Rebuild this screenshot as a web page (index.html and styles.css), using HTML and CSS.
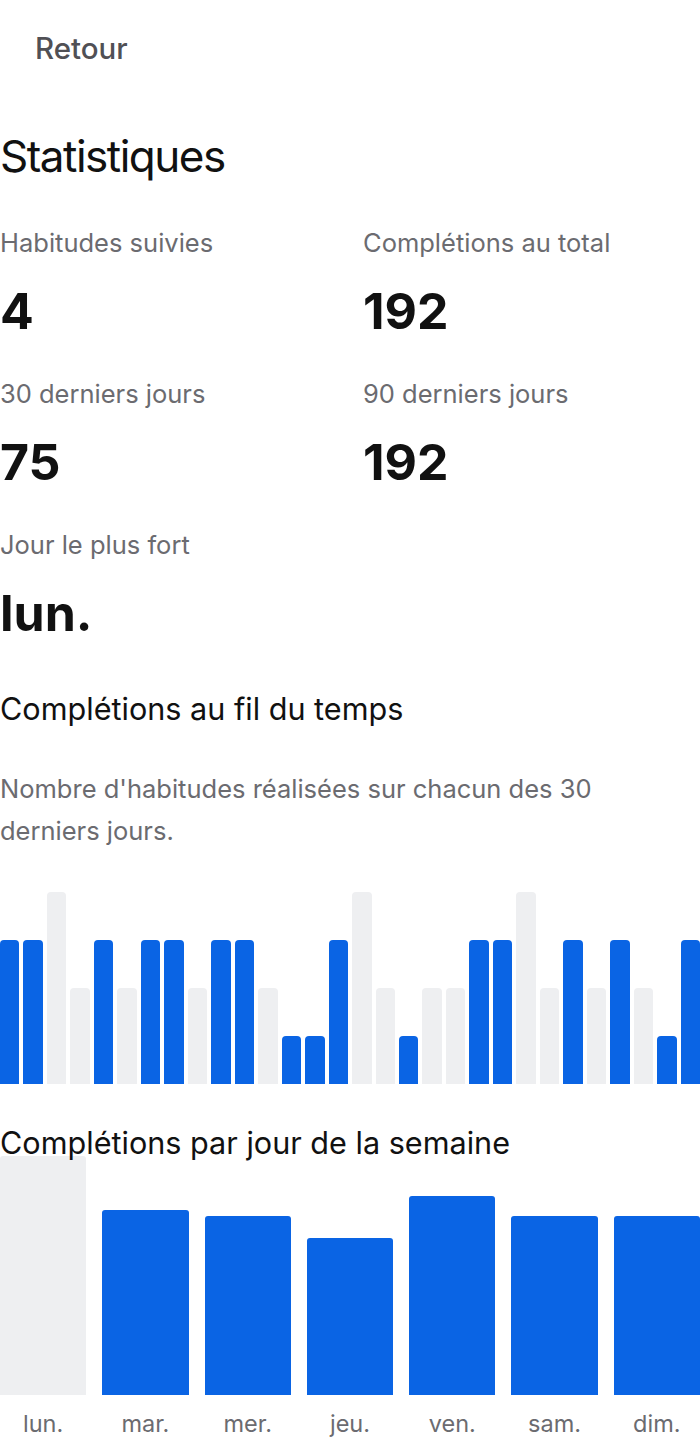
FILE: index.html
```html
<!DOCTYPE html>
<html lang="fr">
<head>
    <meta charset="UTF-8">
    <title>Statistiques</title>
    <link rel="stylesheet" href="styles.css">
</head>
<body>
<div class="page">
    <div class="top">
        <button class="back" type="button">Retour</button>
    </div>

    <h1 class="title">Statistiques</h1>

    <div class="stats">
        <div class="stat">
            <div class="stat-label">Habitudes suivies</div>
            <div class="stat-value">4</div>
        </div>
        <div class="stat">
            <div class="stat-label">Complétions au total</div>
            <div class="stat-value">192</div>
        </div>
        <div class="stat">
            <div class="stat-label">30 derniers jours</div>
            <div class="stat-value">75</div>
        </div>
        <div class="stat">
            <div class="stat-label">90 derniers jours</div>
            <div class="stat-value">192</div>
        </div>
        <div class="stat">
            <div class="stat-label">Jour le plus fort</div>
            <div class="stat-value">lun.</div>
        </div>
    </div>

    <h2 class="section-title">Complétions au fil du temps</h2>
    <p class="section-desc">Nombre d'habitudes réalisées sur chacun des 30 derniers jours.</p>

    <!-- max = 4 habitudes -->
    <div class="daily">
        <div class="bar" style="height: 75%"></div>
        <div class="bar" style="height: 75%"></div>
        <div class="bar alt" style="height: 100%"></div>
        <div class="bar alt" style="height: 50%"></div>
        <div class="bar" style="height: 75%"></div>
        <div class="bar alt" style="height: 50%"></div>
        <div class="bar" style="height: 75%"></div>
        <div class="bar" style="height: 75%"></div>
        <div class="bar alt" style="height: 50%"></div>
        <div class="bar" style="height: 75%"></div>
        <div class="bar" style="height: 75%"></div>
        <div class="bar alt" style="height: 50%"></div>
        <div class="bar" style="height: 25%"></div>
        <div class="bar" style="height: 25%"></div>
        <div class="bar" style="height: 75%"></div>
        <div class="bar alt" style="height: 100%"></div>
        <div class="bar alt" style="height: 50%"></div>
        <div class="bar" style="height: 25%"></div>
        <div class="bar alt" style="height: 50%"></div>
        <div class="bar alt" style="height: 50%"></div>
        <div class="bar" style="height: 75%"></div>
        <div class="bar" style="height: 75%"></div>
        <div class="bar alt" style="height: 100%"></div>
        <div class="bar alt" style="height: 50%"></div>
        <div class="bar" style="height: 75%"></div>
        <div class="bar alt" style="height: 50%"></div>
        <div class="bar" style="height: 75%"></div>
        <div class="bar alt" style="height: 50%"></div>
        <div class="bar" style="height: 25%"></div>
        <div class="bar" style="height: 75%"></div>
    </div>

    <h2 class="section-title week-title">Complétions par jour de la semaine</h2>

    <!-- 35 / 27 / 26 / 23 / 29 / 26 / 26 -->
    <div class="weekly">
        <div class="day">
            <div class="day-track"><div class="day-bar alt" style="height: 100%"></div></div>
            <span class="day-label">lun.</span>
        </div>
        <div class="day">
            <div class="day-track"><div class="day-bar" style="height: 77.3%"></div></div>
            <span class="day-label">mar.</span>
        </div>
        <div class="day">
            <div class="day-track"><div class="day-bar" style="height: 74.8%"></div></div>
            <span class="day-label">mer.</span>
        </div>
        <div class="day">
            <div class="day-track"><div class="day-bar" style="height: 65.7%"></div></div>
            <span class="day-label">jeu.</span>
        </div>
        <div class="day">
            <div class="day-track"><div class="day-bar" style="height: 83.2%"></div></div>
            <span class="day-label">ven.</span>
        </div>
        <div class="day">
            <div class="day-track"><div class="day-bar" style="height: 74.8%"></div></div>
            <span class="day-label">sam.</span>
        </div>
        <div class="day">
            <div class="day-track"><div class="day-bar" style="height: 74.8%"></div></div>
            <span class="day-label">dim.</span>
        </div>
    </div>
</div>
</body>
</html>
```

FILE: styles.css
```css
body {
    margin: 0;
    background: #ffffff;
    color: #111111;
    font-family: Inter, "Noto Sans", "Liberation Sans", sans-serif;
}

.page {
    width: 700px;
    overflow: hidden;
}

.top {
    padding-top: 14px;
}

.back {
    padding: 0 35px;
    font: 500 29.5px/68px Inter, "Noto Sans", sans-serif;
    color: #505055;
    background: none;
    border: none;
    cursor: pointer;
}

.title {
    margin: 48px 0 0;
    font-size: 44px;
    line-height: 52px;
    font-weight: 400;
    letter-spacing: -1.5px;
}

.stats {
    display: grid;
    grid-template-columns: 1fr 1fr;
    column-gap: 26px;
    row-gap: 40px;
    margin-top: 46px;
}

.stat-label {
    font-size: 25.5px;
    line-height: 30px;
    color: #6b6b70;
}

.stat-value {
    margin-top: 25px;
    font-size: 50px;
    line-height: 56px;
    font-weight: 700;
}

.section-title {
    margin: 50px 0 0;
    font-size: 30.6px;
    line-height: 36px;
    font-weight: 400;
}

.section-desc {
    max-width: 620px;
    margin: 41px 0 0;
    font-size: 25.5px;
    line-height: 42px;
    color: #6b6b70;
}

.daily {
    display: flex;
    align-items: flex-end;
    gap: 4px;
    height: 192px;
    margin-top: 40px;
}

.daily .bar {
    flex: 1;
    background: #0a64e4;
    border-radius: 4px 4px 0 0;
}

.daily .bar.alt,
.day-bar.alt {
    background: #eeeff1;
}

.week-title {
    margin-top: 41px;
    margin-bottom: -5px;
    position: relative;
    z-index: 1;
}

.weekly {
    display: flex;
    gap: 16px;
}

.day {
    flex: 1;
    display: flex;
    flex-direction: column;
    align-items: center;
}

.day-track {
    width: 100%;
    height: 239px;
    display: flex;
    align-items: flex-end;
}

.day-bar {
    width: 100%;
    background: #0a64e4;
    border-radius: 3px 3px 0 0;
}

.day-label {
    margin-top: 15px;
    font-size: 23.5px;
    line-height: 28px;
    color: #6b6b70;
}
```
